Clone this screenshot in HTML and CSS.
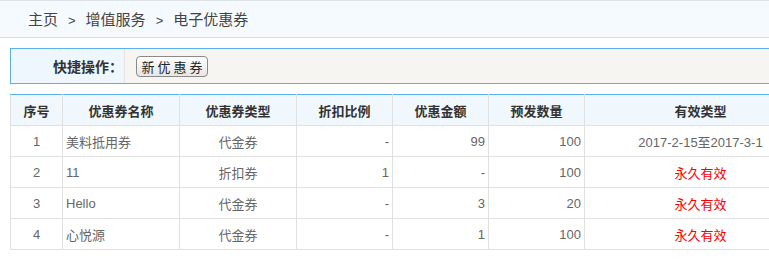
FILE: index.html
```html
<!DOCTYPE html>
<html lang="zh-CN">

<head>
    <meta charset="UTF-8">
    <meta name="viewport" content="width=device-width, initial-scale=1.0">
    <title>电子优惠券</title>
    <link rel="stylesheet" href="styles.css">
</head>

<body>
    <div class="breadcrumb">
        <span>主页</span><span class="sep">&gt;</span><span>增值服务</span><span class="sep">&gt;</span><span>电子优惠券</span>
    </div>

    <div class="main">
        <div class="quick">
            <div class="quick-label">快捷操作：</div>
            <div class="quick-body">
                <button class="btn">新优惠券</button>
            </div>
        </div>

        <table class="list">
            <colgroup>
                <col style="width: 52px">
                <col style="width: 117px">
                <col style="width: 117px">
                <col style="width: 96px">
                <col style="width: 96px">
                <col style="width: 96px">
                <col style="width: 232px">
            </colgroup>
            <thead>
                <tr>
                    <th>序号</th>
                    <th>优惠券名称</th>
                    <th>优惠券类型</th>
                    <th>折扣比例</th>
                    <th>优惠金额</th>
                    <th>预发数量</th>
                    <th>有效类型</th>
                </tr>
            </thead>
            <tbody>
                <tr>
                    <td class="c">1</td>
                    <td>美料抵用券</td>
                    <td class="c">代金券</td>
                    <td class="r">-</td>
                    <td class="r">99</td>
                    <td class="r">100</td>
                    <td class="c">2017-2-15至2017-3-1</td>
                </tr>
                <tr>
                    <td class="c">2</td>
                    <td>11</td>
                    <td class="c">折扣券</td>
                    <td class="r">1</td>
                    <td class="r">-</td>
                    <td class="r">100</td>
                    <td class="c red">永久有效</td>
                </tr>
                <tr>
                    <td class="c">3</td>
                    <td>Hello</td>
                    <td class="c">代金券</td>
                    <td class="r">-</td>
                    <td class="r">3</td>
                    <td class="r">20</td>
                    <td class="c red">永久有效</td>
                </tr>
                <tr>
                    <td class="c">4</td>
                    <td>心悦源</td>
                    <td class="c">代金券</td>
                    <td class="r">-</td>
                    <td class="r">1</td>
                    <td class="r">100</td>
                    <td class="c red">永久有效</td>
                </tr>
            </tbody>
        </table>
    </div>
</body>

</html>
```

FILE: styles.css
```css
html,
body {
    margin: 0;
    overflow: hidden;
}

body {
    font-family: "Noto Sans CJK SC", "Noto Sans", sans-serif;
    color: #555;
    width: 840px;
}

.breadcrumb {
    height: 36px;
    line-height: 36px;
    padding-left: 28px;
    background: #f5fafe;
    border-top: 1px solid #dde3e8;
    border-bottom: 1px solid #dcdcdc;
    font-size: 15px;
    color: #444;
}

.breadcrumb .sep {
    font-family: "Liberation Sans", sans-serif;
    font-size: 13px;
    margin: 0 10px;
}

.main {
    padding: 10px 0 0 10px;
}

.quick {
    display: flex;
    height: 34px;
    border: 1px solid #5aafef;
    background: #f6f5f1;
}

.quick-label {
    width: 112px;
    padding-right: 1px;
    text-align: right;
    line-height: 34px;
    font-size: 14px;
    font-weight: bold;
    color: #333;
    background: #eef7fd;
    border-right: 1px solid #e2e2e2;
}

.quick-body {
    display: flex;
    align-items: center;
    padding-left: 11px;
}

.btn {
    height: 21px;
    width: 72px;
    padding: 0;
    font-family: "Noto Sans CJK SC", sans-serif;
    font-size: 13px;
    letter-spacing: 3px;
    text-indent: 3px;
    line-height: 19px;
    color: #222;
    border: 1px solid #8a8a8a;
    border-radius: 4px;
    background: linear-gradient(#ffffff, #e6e6e6);
}

.list {
    margin-top: 10px;
    width: 806px;
    table-layout: fixed;
    border-collapse: collapse;
    border-top: 1px solid #5aafef;
    font-size: 13px;
}

.list th,
.list td {
    height: 30px;
    padding: 0 3px;
    border: 1px solid #e0e0e0;
}

.list tr:first-child th {
    border-top: 1px solid #5aafef;
}

.list th {
    background: #f0f8fe;
    color: #333;
    font-weight: bold;
}

.list td {
    color: #666;
    font-family: "Liberation Sans", "Noto Sans CJK SC", sans-serif;
}

.list td.c {
    text-align: center;
}

.list td.r {
    text-align: right;
}

.list td.red {
    color: #f00;
}
```
